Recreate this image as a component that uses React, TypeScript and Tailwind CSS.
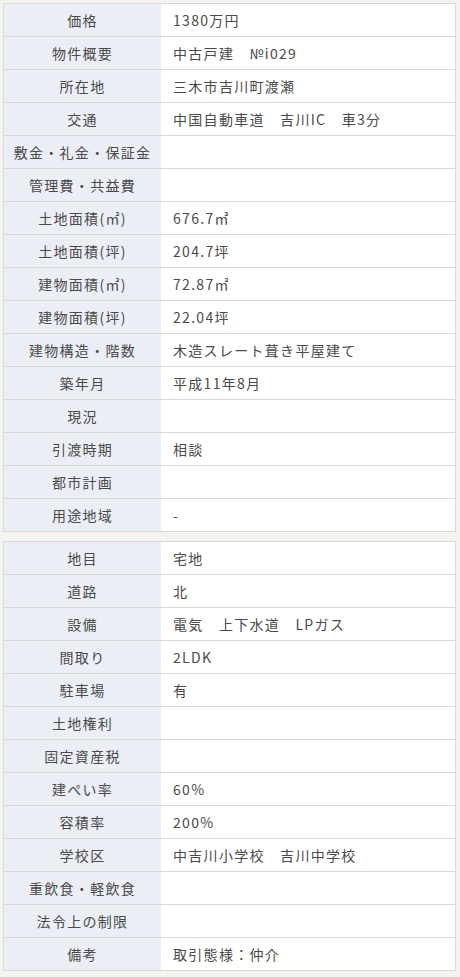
import React from "react";

type Row = {
    label: string;
    value: string;
};

const basicInfo: Row[] = [
    { label: "価格", value: "1380万円" },
    { label: "物件概要", value: "中古戸建　№i029" },
    { label: "所在地", value: "三木市吉川町渡瀬" },
    { label: "交通", value: "中国自動車道　吉川IC　車3分" },
    { label: "敷金・礼金・保証金", value: "" },
    { label: "管理費・共益費", value: "" },
    { label: "土地面積(㎡)", value: "676.7㎡" },
    { label: "土地面積(坪)", value: "204.7坪" },
    { label: "建物面積(㎡)", value: "72.87㎡" },
    { label: "建物面積(坪)", value: "22.04坪" },
    { label: "建物構造・階数", value: "木造スレート葺き平屋建て" },
    { label: "築年月", value: "平成11年8月" },
    { label: "現況", value: "" },
    { label: "引渡時期", value: "相談" },
    { label: "都市計画", value: "" },
    { label: "用途地域", value: "-" }
];

const detailInfo: Row[] = [
    { label: "地目", value: "宅地" },
    { label: "道路", value: "北" },
    { label: "設備", value: "電気　上下水道　LPガス" },
    { label: "間取り", value: "2LDK" },
    { label: "駐車場", value: "有" },
    { label: "土地権利", value: "" },
    { label: "固定資産税", value: "" },
    { label: "建ぺい率", value: "60%" },
    { label: "容積率", value: "200%" },
    { label: "学校区", value: "中吉川小学校　吉川中学校" },
    { label: "重飲食・軽飲食", value: "" },
    { label: "法令上の制限", value: "" },
    { label: "備考", value: "取引態様：仲介" }
];

const InfoTable: React.FC<{ rows: Row[] }> = ({ rows }) => {
    return (
        <div className="border border-[#d9d9d9] bg-white flex flex-col divide-y divide-[#d9d9d9]">
            {rows.map((row: Row) => (
                <div key={row.label} className="flex h-[32px] box-content">
                    {/* Label */}
                    <div className="w-[157px] shrink-0 bg-[#eceef6] flex items-center justify-center">
                        {row.label}
                    </div>
                    {/* Value */}
                    <div className="flex-1 flex items-center pl-[12px]">
                        {row.value}
                    </div>
                </div>
            ))}
        </div>
    );
};

const App: React.FC = () => {
    return (
        <div className="min-h-screen bg-[#f4f3f0] pt-[3px] pl-[3px] pr-[4px] pb-[6px] text-[14px] text-[#4a4a4a] tracking-[1.3px] leading-none font-['Noto_Sans_CJK_JP','Noto_Sans',sans-serif]">
            <div className="flex flex-col gap-[9px]">
                <InfoTable rows={basicInfo} />
                <InfoTable rows={detailInfo} />
            </div>
        </div>
    );
};

export default App;
